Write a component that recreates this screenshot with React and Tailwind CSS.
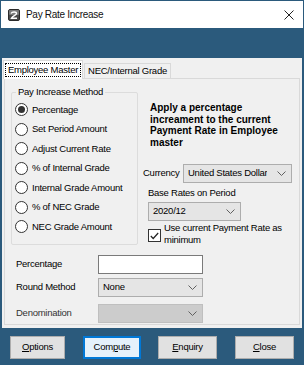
import React from 'react';

const Chevron = () => (
  <svg width="9" height="5" viewBox="0 0 9 5" className="shrink-0">
    <polyline points="0.5,0.5 4.5,4.5 8.5,0.5" fill="none" stroke="#606060" strokeWidth="1" />
  </svg>
);

const Combo = ({ value, width, disabled }) => (
  <div
    className={`h-[19px] ${width} flex items-center justify-between pl-[4px] pr-[5px] border ${
      disabled ? 'bg-[#cccccc] border-[#bfbfbf]' : 'bg-[#e5e5e5] border-[#adadad]'
    }`}
  >
    <span className="truncate">{value}</span>
    <Chevron />
  </div>
);

const Radio = ({ label, checked }) => (
  <div className="h-[19.5px] flex items-center">
    <span className="ml-[3px] w-[13px] h-[13px] rounded-full border border-[#333333] bg-white flex items-center justify-center">
      {checked && <span className="w-[7px] h-[7px] rounded-full bg-[#333333]" />}
    </span>
    <span className="ml-[4px] whitespace-nowrap">{label}</span>
  </div>
);

const Btn = ({ children, className = '', focused }) => (
  <button
    className={`h-[23px] flex items-center justify-center ${
      focused ? 'bg-[#e5f1fb] border-2 border-[#0078d7]' : 'bg-[#e1e1e1] border border-[#adadad]'
    } ${className}`}
  >
    {children}
  </button>
);

const methods = [
  'Percentage',
  'Set Period Amount',
  'Adjust Current Rate',
  '% of Internal Grade',
  'Internal Grade Amount',
  '% of NEC Grade',
  'NEC Grade Amount',
];

export default function App() {
  return (
    <div className="w-[304px] h-[365px] bg-[#2b5a7c] p-[1px] flex flex-col font-['Liberation_Sans',Arial,sans-serif] text-[9.5px] tracking-[-0.25px] text-black overflow-hidden">
      {/* Title bar */}
      <div className="h-[27px] bg-white flex items-center pl-[7px] pr-[9px]">
        <svg width="12" height="12" viewBox="0 0 12 12">
          <rect x="0.5" y="0.5" width="11" height="11" rx="1.5" fill="#4a4a4a" stroke="#2a2a2a" />
          <rect x="1" y="1" width="10" height="5" rx="1" fill="#7a7a7a" />
          <path d="M3 4.5 C4 2.5 8.5 2.5 8.5 4.5 C8.5 6 5 6.5 3.5 9.2 L9 9.2" fill="none" stroke="#ffffff" strokeWidth="1.4" />
        </svg>
        <span className="ml-[6px] text-[10px] tracking-[-0.3px] text-[#111]">Pay Rate Increase</span>
        <svg width="10" height="10" viewBox="0 0 10 10" className="ml-auto">
          <path d="M0.5 0.5 L9.5 9.5 M9.5 0.5 L0.5 9.5" stroke="#222" strokeWidth="1" />
        </svg>
      </div>

      {/* Blue band */}
      <div className="h-[30px]" />

      {/* Client area */}
      <div className="mx-[1px] h-[270px] bg-[#f0f0f0] flex flex-col">
        {/* Tabs */}
        <div className="h-[20px] flex items-end pl-[1px]">
          <div className="relative z-10 -mb-px h-[19px] w-[80px] bg-white border border-b-0 border-[#d9d9d9] flex items-center justify-center">
            <span className="border border-dotted border-black px-[2px] leading-[12px]">Employee Master</span>
          </div>
          <div className="h-[15px] w-[87px] ml-px bg-[#f0f0f0] border border-b-0 border-[#d9d9d9] flex items-center justify-center">
            NEC/Internal Grade
          </div>
        </div>

        {/* Tab page */}
        <div className="mx-[2px] h-[247px] border border-[#d9d9d9] bg-[#f0f0f0] flex flex-col">
          <div className="flex">
            <fieldset className="ml-[6px] mt-[7px] w-[127px] h-[159px] border border-[#dcdcdc] rounded-[2px]">
              <legend className="ml-[4px] px-[2px] leading-[12px]">Pay Increase Method</legend>
              <div className="pt-[2px]">
                {methods.map((m, i) => (
                  <Radio key={m} label={m} checked={i === 0} />
                ))}
              </div>
            </fieldset>

            <div className="ml-[5px] flex flex-col">
              <div className="mt-[23px] pl-[7px] font-bold text-[10px] tracking-normal leading-[11.5px]">
                Apply a percentage
                <br />
                increament to the current
                <br />
                Payment Rate in Employee
                <br />
                master
              </div>
              <div className="mt-[16px] flex items-center">
                <span className="w-[40px]">Currency</span>
                <Combo value="United States Dollar" width="w-[109px]" />
              </div>
              <div className="mt-[4px] ml-[5px] leading-[12px]">Base Rates on Period</div>
              <div className="mt-[3px] ml-[5px]">
                <Combo value="2020/12" width="w-[93px]" />
              </div>
              <div className="mt-[1px] ml-[5px] flex items-start">
                <span className="mt-[7px] w-[13px] h-[13px] border border-[#333333] bg-white flex items-center justify-center shrink-0">
                  <svg width="9" height="8" viewBox="0 0 9 8">
                    <polyline points="0.8,4 3.2,6.5 8.2,1" fill="none" stroke="#222" strokeWidth="1.2" />
                  </svg>
                </span>
                <span className="ml-[3px] leading-[12px]">
                  Use current Payment Rate as
                  <br />
                  minimum
                </span>
              </div>
            </div>
          </div>

          {/* Bottom fields */}
          <div className="mt-[9px] pl-[11px] flex flex-col">
            <div className="h-[19px] flex items-center">
              <span className="w-[82px]">Percentage</span>
              <div className="w-[105px] h-[19px] bg-white border border-[#7a7a7a]" />
            </div>
            <div className="mt-[4px] flex items-center">
              <span className="w-[82px]">Round Method</span>
              <Combo value="None" width="w-[105px]" />
            </div>
            <div className="mt-[7px] flex items-center">
              <span className="w-[82px] text-[#333]">Denomination</span>
              <Combo value="" width="w-[105px]" disabled />
            </div>
          </div>
        </div>
      </div>

      {/* Button bar */}
      <div className="flex pt-[8px] pl-[9px]">
        <Btn className="w-[55px]">
          <span className="underline">O</span>ptions
        </Btn>
        <Btn className="w-[58px] ml-[18px]" focused>
          Com<span className="underline">p</span>ute
        </Btn>
        <Btn className="w-[59px] ml-[17px]">
          <span className="underline">E</span>nquiry
        </Btn>
        <Btn className="w-[59px] ml-[18px]">
          <span className="underline">C</span>lose
        </Btn>
      </div>
    </div>
  );
}
